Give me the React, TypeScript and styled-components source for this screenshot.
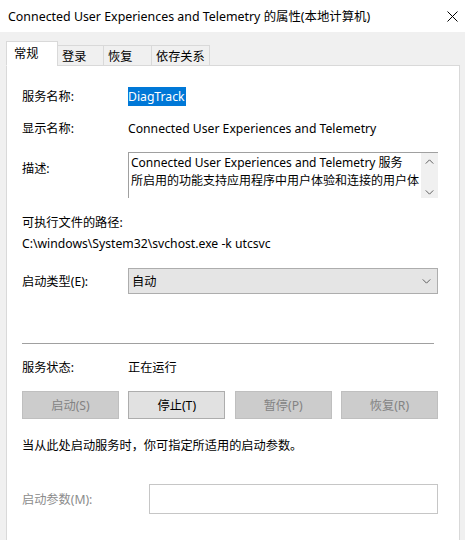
import React from 'react';
import styled, { createGlobalStyle } from 'styled-components';

const GlobalStyle = createGlobalStyle`
  html, body {
    margin: 0;
    padding: 0;
    background: #f0f0f0;
  }
  body {
    font-family: "Noto Sans", "Noto Sans CJK SC", sans-serif;
    font-size: 12.2px;
    color: #000;
  }
`;

const Window = styled.div`
  width: 465px;
  height: 540px;
  background: #f0f0f0;
  overflow: hidden;
  display: flex;
  flex-direction: column;
`;

const TitleBar = styled.div`
  height: 32px;
  flex-shrink: 0;
  background: #fff;
  display: flex;
  align-items: center;
  justify-content: space-between;
  padding: 0 7px 0 8px;
  font-size: 12.4px;
`;

const CloseButton = styled.div`
  width: 12px;
  height: 12px;
  display: flex;
  align-items: center;
  justify-content: center;
`;

const Body = styled.div`
  flex: 1;
  padding: 9px 5px 0 6px;
  display: flex;
  flex-direction: column;
`;

const TabRow = styled.div`
  display: flex;
  align-items: flex-end;
  height: 25px;
  position: relative;
  z-index: 1;
  margin-bottom: -1px;
`;

const Tab = styled.div<{ $active?: boolean; $w: number }>`
  height: ${p => (p.$active ? '25px' : '21px')};
  width: ${p => p.$w}px;
  padding-left: ${p => (p.$active ? '7px' : '4px')};
  padding-bottom: ${p => (p.$active ? '2px' : '0')};
  display: flex;
  align-items: center;
  white-space: nowrap;
  background: ${p => (p.$active ? '#fff' : '#f0f0f0')};
  border: 1px solid #d9d9d9;
  border-bottom: 1px solid ${p => (p.$active ? '#fff' : '#d9d9d9')};
  margin-left: ${p => (p.$active ? '0' : '-1px')};
  box-sizing: border-box;
`;

const Panel = styled.div`
  flex: 1;
  background: #fff;
  border: 1px solid #d9d9d9;
  border-bottom: none;
  padding: 0 21px 0 15px;
  display: flex;
  flex-direction: column;
`;

const Row = styled.div<{ $mt: number; $h?: number }>`
  display: flex;
  align-items: center;
  margin-top: ${p => p.$mt}px;
  height: ${p => (p.$h ? `${p.$h}px` : '16px')};
`;

const Label = styled.div<{ $w?: number; $muted?: boolean }>`
  width: ${p => (p.$w ? p.$w : 106)}px;
  flex-shrink: 0;
  color: ${p => (p.$muted ? '#8c8c8c' : '#000')};
  white-space: nowrap;
`;

const Value = styled.div`
  white-space: nowrap;
`;

const Selected = styled.span`
  background: #0078d7;
  color: #fff;
  padding: 1px 1px 1px 0;
`;

const DescRow = styled.div`
  display: flex;
  align-items: flex-start;
  margin-top: 16px;
`;

const DescLabel = styled(Label)`
  padding-top: 7px;
`;

const DescBox = styled.div`
  width: 311px;
  height: 46px;
  border-top: 1px solid #a0a0a0;
  border-left: 1px solid #a0a0a0;
  box-sizing: border-box;
  display: flex;
  overflow: hidden;
`;

const DescText = styled.div`
  flex: 1;
  padding: 1px 0 0 2px;
  font-size: 12px;
  line-height: 18px;
  overflow: hidden;
  white-space: nowrap;
`;

const ScrollBar = styled.div`
  width: 17px;
  flex-shrink: 0;
  background: #f0f0f0;
  display: flex;
  flex-direction: column;
  justify-content: space-between;
  align-items: center;
  padding: 6px 0 3px;
  box-sizing: border-box;
`;

const PathLine = styled.div<{ $mt: number }>`
  margin-top: ${p => p.$mt}px;
  height: 16px;
  line-height: 16px;
  white-space: nowrap;
`;

const Select = styled.div`
  width: 311px;
  height: 26px;
  box-sizing: border-box;
  background: #e5e5e5;
  border: 1px solid #adadad;
  display: flex;
  align-items: center;
  justify-content: space-between;
  padding: 0 6px 0 3px;
`;

const Separator = styled.div`
  margin-top: 49px;
  height: 1px;
  width: 412px;
  background: #a0a0a0;
`;

const ButtonRow = styled.div`
  margin-top: 16px;
  width: 416px;
  display: flex;
  justify-content: space-between;
`;

const Button = styled.div<{ $disabled?: boolean }>`
  width: 97px;
  height: 28px;
  box-sizing: border-box;
  display: flex;
  align-items: center;
  justify-content: center;
  background: ${p => (p.$disabled ? '#cccccc' : '#e1e1e1')};
  border: 1px solid ${p => (p.$disabled ? '#bfbfbf' : '#adadad')};
  color: ${p => (p.$disabled ? '#838383' : '#000')};
`;

const Hint = styled.div`
  margin-top: 17px;
  height: 16px;
  white-space: nowrap;
`;

const ParamInput = styled.div`
  width: 291px;
  height: 30px;
  box-sizing: border-box;
  border: 1px solid #c6c6c6;
  background: #fff;
`;

const Chevron: React.FC<{ up?: boolean; size?: number }> = ({ up, size = 9 }) => (
  <svg width={size} height={Math.round(size * 0.6)} viewBox="0 0 10 6">
    <path
      d={up ? 'M0.5 5.5 L5 1 L9.5 5.5' : 'M0.5 0.5 L5 5 L9.5 0.5'}
      fill="none"
      stroke="#606060"
      strokeWidth="1.2"
    />
  </svg>
);

export default function App() {
  return (
    <>
      <GlobalStyle />
      <Window>
        <TitleBar>
          <span>Connected User Experiences and Telemetry 的属性(本地计算机)</span>
          <CloseButton>
            <svg width="11" height="11" viewBox="0 0 11 11">
              <path d="M0.5 0.5 L10.5 10.5 M10.5 0.5 L0.5 10.5" stroke="#000" strokeWidth="1" />
            </svg>
          </CloseButton>
        </TitleBar>
        <Body>
          <TabRow>
            <Tab $active $w={52}>常规</Tab>
            <Tab $w={47}>登录</Tab>
            <Tab $w={49}>恢复</Tab>
            <Tab $w={59}>依存关系</Tab>
          </TabRow>
          <Panel>
            <Row $mt={22}>
              <Label>服务名称:</Label>
              <Value>
                <Selected>DiagTrack</Selected>
              </Value>
            </Row>
            <Row $mt={16}>
              <Label>显示名称:</Label>
              <Value>Connected User Experiences and Telemetry</Value>
            </Row>
            <DescRow>
              <DescLabel>描述:</DescLabel>
              <DescBox>
                <DescText>
                  <div>Connected User Experiences and Telemetry 服务</div>
                  <div>所启用的功能支持应用程序中用户体验和连接的用户体</div>
                </DescText>
                <ScrollBar>
                  <Chevron up />
                  <Chevron />
                </ScrollBar>
              </DescBox>
            </DescRow>
            <PathLine $mt={17}>可执行文件的路径:</PathLine>
            <PathLine $mt={5}>C:\windows\System32\svchost.exe -k utcsvc</PathLine>
            <Row $mt={16} $h={26}>
              <Label>启动类型(E):</Label>
              <Select>
                <span>自动</span>
                <Chevron />
              </Select>
            </Row>
            <Separator />
            <Row $mt={15}>
              <Label>服务状态:</Label>
              <Value>正在运行</Value>
            </Row>
            <ButtonRow>
              <Button $disabled>启动(S)</Button>
              <Button>停止(T)</Button>
              <Button $disabled>暂停(P)</Button>
              <Button $disabled>恢复(R)</Button>
            </ButtonRow>
            <Hint>当从此处启动服务时，你可指定所适用的启动参数。</Hint>
            <Row $mt={32} $h={30}>
              <Label $w={127} $muted>启动参数(M):</Label>
              <ParamInput />
            </Row>
          </Panel>
        </Body>
      </Window>
    </>
  );
}
